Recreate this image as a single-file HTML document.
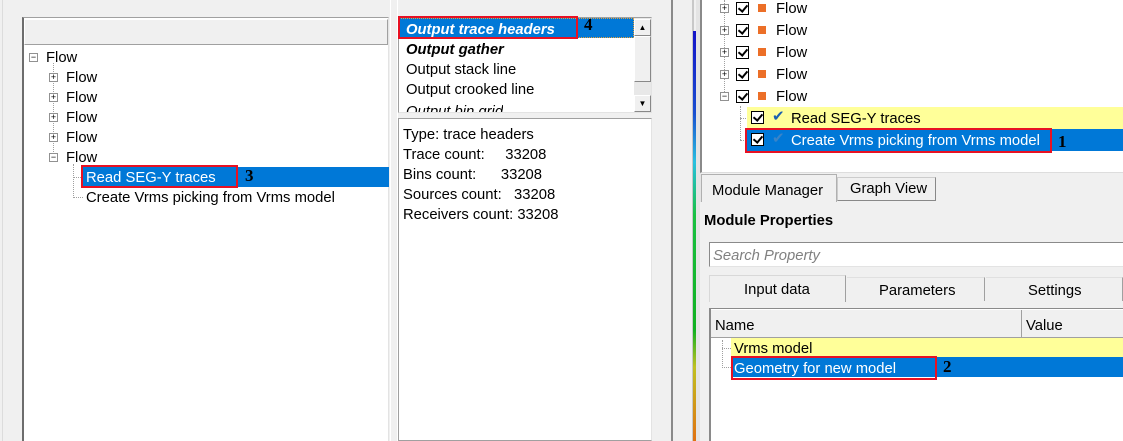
<!DOCTYPE html>
<html><head><meta charset="utf-8"><style>
*{margin:0;padding:0;box-sizing:border-box}
body{width:1123px;height:441px;overflow:hidden;background:#f0f0f0;font-family:"Liberation Sans",sans-serif;font-size:14.8px;color:#000;position:relative}
.a{position:absolute;white-space:nowrap}
.t{position:absolute;white-space:nowrap;line-height:20px;padding-top:1px}
.pm{position:absolute;width:9px;height:9px;border:1px solid #919191;background:#fff;font-size:9px;line-height:7px;text-align:center;color:#000}
.cb{position:absolute;width:13px;height:13px;border:1px solid #000;background:#fff}
.cb:after{content:"";position:absolute;left:3px;top:0px;width:4px;height:7px;border-right:2px solid #000;border-bottom:2px solid #000;transform:rotate(40deg)}
.sq{position:absolute;width:8px;height:8px;background:#ec6f28}
.num{position:absolute;font-family:"Liberation Serif",serif;font-weight:bold;font-size:17px}
.red{position:absolute;border:2px solid #e81123}
.vd{position:absolute;border-left:1px dotted #a0a0a0}
.hd{position:absolute;border-top:1px dotted #a0a0a0}
</style></head><body>
<div class="a" style="left:2px;top:0;width:1px;height:441px;background:#dcdcdc"></div>
<div class="a" style="left:22px;top:17px;width:367px;height:424px;background:#fff;border-left:2px solid #6d6d6d;border-top:1px solid #a0a0a0;border-right:1px solid #e3e3e3"></div>
<div class="a" style="left:24px;top:19px;width:364px;height:26px;background:#f0f0f0;border:1px solid #a0a0a0;border-top-color:#fff;border-left-color:#fff"></div>
<div class="a" style="left:390px;top:0;width:1px;height:441px;background:#fff"></div>
<div class="a" style="left:397px;top:0;width:1px;height:441px;background:#fff"></div>
<div class="pm" style="left:29px;top:53px">−</div>
<div class="t" style="left:46px;top:47px">Flow</div>
<div class="vd" style="left:53px;top:63px;height:95px"></div>
<div class="pm" style="left:49px;top:73px">+</div><div class="t" style="left:66px;top:67px">Flow</div>
<div class="pm" style="left:49px;top:93px">+</div><div class="t" style="left:66px;top:87px">Flow</div>
<div class="pm" style="left:49px;top:113px">+</div><div class="t" style="left:66px;top:107px">Flow</div>
<div class="pm" style="left:49px;top:133px">+</div><div class="t" style="left:66px;top:127px">Flow</div>
<div class="pm" style="left:49px;top:153px">−</div><div class="t" style="left:66px;top:147px">Flow</div>
<div class="vd" style="left:73px;top:164px;height:34px"></div>
<div class="hd" style="left:73px;top:177px;width:10px"></div>
<div class="hd" style="left:73px;top:197px;width:10px"></div>
<div class="a" style="left:82px;top:167px;width:307px;height:20px;background:#0078d7"></div>
<div class="t" style="left:86px;top:167px;color:#fff">Read SEG-Y traces</div>
<div class="red" style="left:81px;top:165px;width:157px;height:23px"></div>
<div class="num" style="left:245px;top:166px">3</div>
<div class="t" style="left:86px;top:187px">Create Vrms picking from Vrms model</div>
<div class="a" style="left:398px;top:17px;width:254px;height:96px;background:#fff;border:1px solid #a0a0a0;border-right-color:#e3e3e3;border-bottom-color:#e3e3e3"></div>
<div class="a" style="left:399px;top:18px;width:235px;height:20px;background:#0078d7;border:1px dotted #e0a040"></div>
<div class="t" style="left:406px;top:19px;color:#fff;font-weight:bold;font-style:italic">Output trace headers</div>
<div class="red" style="left:398px;top:16px;width:180px;height:23px"></div>
<div class="num" style="left:584px;top:15px">4</div>
<div class="t" style="left:406px;top:39px;font-weight:bold;font-style:italic">Output gather</div>
<div class="t" style="left:406px;top:59px">Output stack line</div>
<div class="t" style="left:406px;top:79px">Output crooked line</div>
<div class="a" style="left:406px;top:101px;height:11px;overflow:hidden;line-height:20px;font-style:italic;padding-top:1px">Output bin grid</div>
<div class="a" style="left:634px;top:18px;width:17px;height:94px;background:#e8e8e8"></div>
<div class="a" style="left:634px;top:19px;width:17px;height:17px;background:#f0f0f0;border:1px solid #888;border-top-color:#fff;border-left-color:#fff;font-size:8px;text-align:center;line-height:15px">▲</div>
<div class="a" style="left:634px;top:36px;width:17px;height:46px;background:#f0f0f0;border:1px solid #888;border-top-color:#fff;border-left-color:#fff"></div>
<div class="a" style="left:634px;top:95px;width:17px;height:17px;background:#f0f0f0;border:1px solid #888;border-top-color:#fff;border-left-color:#fff;font-size:8px;text-align:center;line-height:15px">▼</div>
<div class="a" style="left:398px;top:118px;width:254px;height:323px;background:#fff;border:1px solid #a0a0a0;border-right-color:#e3e3e3"></div>
<div class="t" style="left:403px;top:124px">Type: trace headers</div>
<div class="t" style="left:403px;top:144px">Trace count:&nbsp;&nbsp;&nbsp;&nbsp; 33208</div>
<div class="t" style="left:403px;top:164px">Bins count:&nbsp;&nbsp;&nbsp;&nbsp;&nbsp; 33208</div>
<div class="t" style="left:403px;top:184px">Sources count:&nbsp;&nbsp; 33208</div>
<div class="t" style="left:403px;top:204px">Receivers count: 33208</div>
<div class="a" style="left:671px;top:0;width:2px;height:441px;background:#8a8a8a"></div>
<div class="a" style="left:692px;top:0;width:2px;height:441px;background:#c8c8c8"></div>
<div class="a" style="left:693px;top:31px;width:3px;height:410px;background:linear-gradient(#1414c8 0%,#1a4fd0 20%,#28c0e0 32%,#18c040 45%,#10b020 73%,#c0c020 82%,#e07010 100%)"></div>
<div class="a" style="left:696px;top:0;width:5px;height:441px;background:#e4e4e4"></div>
<div class="a" style="left:700px;top:0;width:423px;height:173px;background:#fff;border-left:2px solid #8a8a8a;border-bottom:1px solid #ddd"></div>
<div class="vd" style="left:724px;top:0;height:96px"></div>
<div class="pm" style="left:720px;top:4px">+</div><div class="cb" style="left:736px;top:2px"></div><div class="sq" style="left:758px;top:4px"></div><div class="t" style="left:776px;top:-2px">Flow</div>
<div class="pm" style="left:720px;top:26px">+</div><div class="cb" style="left:736px;top:24px"></div><div class="sq" style="left:758px;top:26px"></div><div class="t" style="left:776px;top:20px">Flow</div>
<div class="pm" style="left:720px;top:48px">+</div><div class="cb" style="left:736px;top:46px"></div><div class="sq" style="left:758px;top:48px"></div><div class="t" style="left:776px;top:42px">Flow</div>
<div class="pm" style="left:720px;top:70px">+</div><div class="cb" style="left:736px;top:68px"></div><div class="sq" style="left:758px;top:70px"></div><div class="t" style="left:776px;top:64px">Flow</div>
<div class="pm" style="left:720px;top:92px">−</div><div class="cb" style="left:736px;top:90px"></div><div class="sq" style="left:758px;top:92px"></div><div class="t" style="left:776px;top:86px">Flow</div>
<div class="vd" style="left:740px;top:106px;height:34px"></div>
<div class="hd" style="left:740px;top:118px;width:8px"></div>
<div class="hd" style="left:740px;top:140px;width:8px"></div>
<div class="a" style="left:747px;top:107px;width:376px;height:22px;background:#ffff99"></div>
<div class="cb" style="left:751px;top:111px"></div>
<div class="a" style="left:772px;top:106px;color:#1a60b0;font-size:15px;line-height:22px">✔</div>
<div class="t" style="left:791px;top:108px">Read SEG-Y traces</div>
<div class="a" style="left:747px;top:129px;width:376px;height:22px;background:#0078d7"></div>
<div class="cb" style="left:751px;top:133px"></div>
<div class="a" style="left:772px;top:128px;color:#3a84c8;font-size:15px;line-height:22px">✔</div>
<div class="t" style="left:791px;top:130px;color:#fff">Create Vrms picking from Vrms model</div>
<div class="red" style="left:745px;top:128px;width:307px;height:25px"></div>
<div class="num" style="left:1058px;top:132px">1</div>
<div class="a" style="left:701px;top:174px;width:136px;height:28px;background:#f0f0f0;border:1px solid #b0b0b0;border-bottom:none"></div>
<div class="t" style="left:712px;top:180px">Module Manager</div>
<div class="a" style="left:837px;top:177px;width:99px;height:24px;background:#f0f0f0;border:1px solid #888;border-top-color:#ccc;border-left-color:#ccc"></div>
<div class="t" style="left:850px;top:178px">Graph View</div>
<div class="a" style="left:700px;top:202px;width:423px;height:239px;background:#f0f0f0"></div>
<div class="t" style="left:704px;top:210px;font-weight:bold">Module Properties</div>
<div class="a" style="left:709px;top:242px;width:414px;height:25px;background:#fff;border:1px solid #8a8a8a;border-right:none;border-bottom-color:#e3e3e3"></div>
<div class="t" style="left:713px;top:245px;color:#808080;font-style:italic">Search Property</div>
<div class="a" style="left:709px;top:275px;width:137px;height:27px;background:#f0f0f0;border:1px solid #d8d8d8;border-bottom:none;border-right:1px solid #a0a0a0"></div>
<div class="t" style="left:744px;top:279px">Input data</div>
<div class="a" style="left:847px;top:277px;width:138px;height:24px;background:#f0f0f0;border-right:1px solid #a0a0a0;border-top:1px solid #e0e0e0"></div>
<div class="t" style="left:879px;top:280px">Parameters</div>
<div class="a" style="left:986px;top:277px;width:137px;height:24px;background:#f0f0f0;border-top:1px solid #e0e0e0;border-right:1px solid #a0a0a0"></div>
<div class="t" style="left:1028px;top:280px">Settings</div>
<div class="a" style="left:709px;top:308px;width:414px;height:133px;background:#fff;border:1px solid #8a8a8a;border-left-width:2px;border-right:none;border-bottom:none"></div>
<div class="a" style="left:711px;top:310px;width:412px;height:28px;background:#f0f0f0;border-bottom:1px solid #a0a0a0"></div>
<div class="a" style="left:1021px;top:310px;width:1px;height:28px;background:#a0a0a0"></div>
<div class="t" style="left:715px;top:315px">Name</div>
<div class="t" style="left:1026px;top:315px">Value</div>
<div class="vd" style="left:722px;top:340px;height:28px"></div>
<div class="hd" style="left:722px;top:348px;width:9px"></div>
<div class="hd" style="left:722px;top:367px;width:9px"></div>
<div class="a" style="left:731px;top:338px;width:392px;height:19px;background:#ffff99"></div>
<div class="t" style="left:734px;top:338px">Vrms model</div>
<div class="a" style="left:731px;top:357px;width:392px;height:20px;background:#0078d7"></div>
<div class="t" style="left:734px;top:358px;color:#fff">Geometry for new model</div>
<div class="red" style="left:731px;top:356px;width:206px;height:24px"></div>
<div class="num" style="left:943px;top:357px">2</div>
</body></html>
